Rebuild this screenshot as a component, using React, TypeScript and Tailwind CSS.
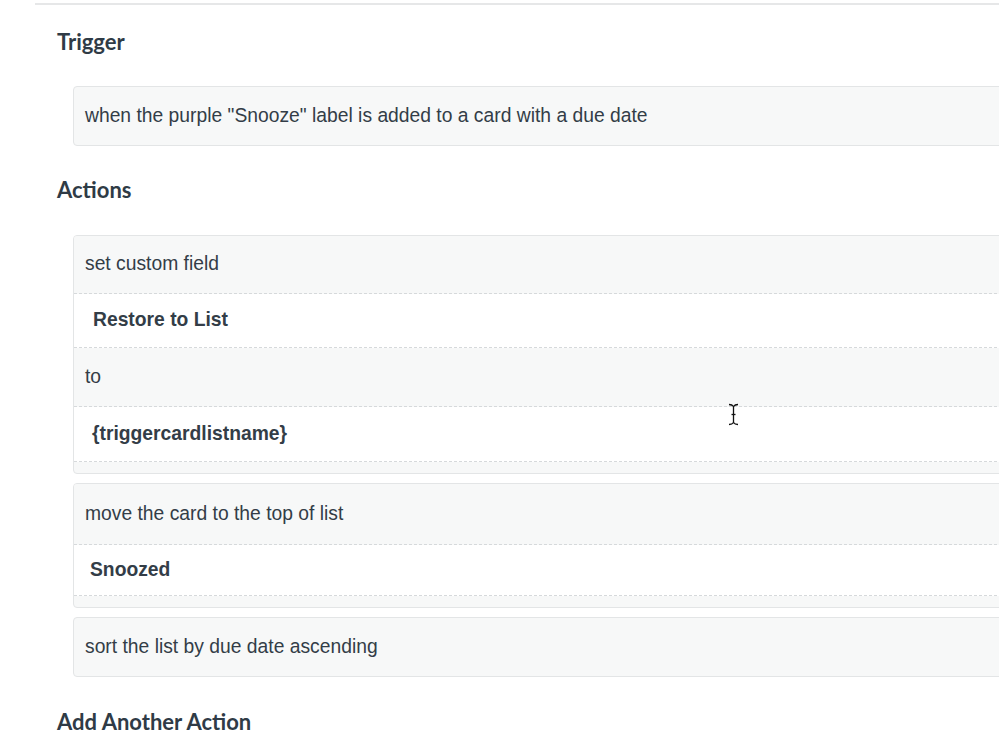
import React from "react"

const body = "font-['Liberation_Sans',Arial,sans-serif] text-[19.3px] text-[#333d47]"
const heading = "font-['Lato',sans-serif] font-bold text-[22px] text-[#2f3b46]"

function Row({
    text,
    bold,
    height,
    indent,
    white,
}: {
    text?: string;
    bold?: boolean;
    height: string;
    indent: string;
    white?: boolean;
}) {
    return (
        <div
            className={`flex items-center border-b border-dashed border-[#d6d9db] ${height} ${indent} ${white ? "bg-white" : "bg-[#f7f8f8]"}`}
        >
            {text && <span className={bold ? "font-bold" : ""}>{text}</span>}
        </div>
    )
}

export default function App() {
    return (
        <div className="relative h-[749px] w-[999px] overflow-hidden bg-white">
            <div className="ml-[35px] mt-[3px] border-t-2 border-[#e6e7e8]">
                <h2 className={`${heading} pl-[22px] pt-[25px] leading-[24px]`}>Trigger</h2>
                <div className={`${body} ml-[38px] mt-[32px] flex h-[60px] w-[960px] items-center rounded-[4px] border border-[#e3e5e6] bg-[#f7f8f8] pl-[11px]`}>
                    when the purple "Snooze" label is added to a card with a due date
                </div>

                <h2 className={`${heading} pl-[22px] pt-[32px] leading-[24px]`}>Actions</h2>
                <div className={`${body} ml-[38px] mt-[33px] flex w-[960px] flex-col gap-[9px]`}>
                    <div className="overflow-hidden rounded-[4px] border border-[#e3e5e6] bg-[#f7f8f8]">
                        <Row text="set custom field" height="h-[58px]" indent="pl-[11px]" />
                        <Row text="Restore to List" bold white height="h-[54px]" indent="pl-[19px]" />
                        <Row text="to" height="h-[59px]" indent="pl-[11px]" />
                        <Row text="{triggercardlistname}" bold white height="h-[55px]" indent="pl-[18px]" />
                        <div className="h-[11px]" />
                    </div>
                    <div className="overflow-hidden rounded-[4px] border border-[#e3e5e6] bg-[#f7f8f8]">
                        <Row text="move the card to the top of list" height="h-[61px]" indent="pl-[11px]" />
                        <Row text="Snoozed" bold white height="h-[51px]" indent="pl-[16px]" />
                        <div className="h-[11px]" />
                    </div>
                    <div className="flex h-[60px] items-center rounded-[4px] border border-[#e3e5e6] bg-[#f7f8f8] pl-[11px]">
                        sort the list by due date ascending
                    </div>
                </div>

                <h2 className={`${heading} pl-[22px] pt-[33px] leading-[24px]`}>Add Another Action</h2>
            </div>

            {/* text cursor */}
            <svg
                className="absolute left-[727px] top-[403px]"
                width="13"
                height="23"
                viewBox="0 0 13 23"
                fill="none"
                stroke="#111"
                strokeWidth="1.3"
            >
                <path d="M2 1.5c2 0 3.5.5 4.5 2 1-1.5 2.5-2 4.5-2" />
                <path d="M6.5 3.5v16" />
                <path d="M4.5 11.5h4" />
                <path d="M2 21.5c2 0 3.5-.5 4.5-2 1 1.5 2.5 2 4.5 2" />
            </svg>
        </div>
    )
}
